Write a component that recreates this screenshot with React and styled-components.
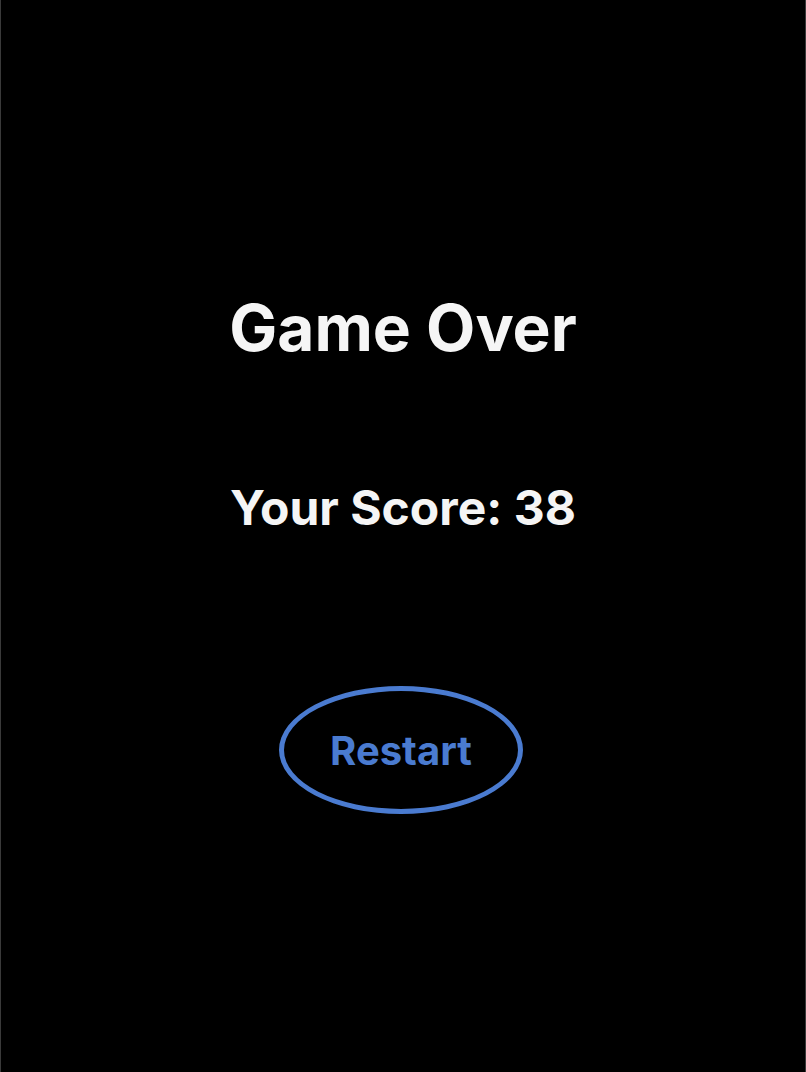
import React from 'react';
import styled, { createGlobalStyle } from 'styled-components';

const GlobalStyle = createGlobalStyle`
  html, body {
    margin: 0;
    padding: 0;
    background: #000;
  }
  body {
    font-family: Inter, "Noto Sans", sans-serif;
  }
`;

const Screen = styled.div`
  box-sizing: border-box;
  height: 1072px;
  display: flex;
  flex-direction: column;
  align-items: center;
  padding-top: 290px;
  background: #000;
  border-left: 1px solid #3a3a3a;
  border-right: 1px solid #3a3a3a;
`;

const Title = styled.h1`
  margin: 0;
  font-size: 64px;
  font-weight: 700;
  line-height: 76px;
  color: #f5f5f5;
`;

const Score = styled.h2`
  margin: 110px 0 0;
  font-size: 48px;
  font-weight: 700;
  line-height: 64px;
  color: #f5f5f5;
`;

const RestartButton = styled.button`
  margin: 146px 4px 0 0;
  width: 244px;
  height: 128px;
  box-sizing: border-box;
  border: 5px solid #4a7bd0;
  border-radius: 50%;
  background: transparent;
  color: #4a7bd0;
  font-family: Inter, "Noto Sans", sans-serif;
  font-size: 40px;
  font-weight: 700;
  cursor: pointer;
`;

export default function App() {
  return (
    <>
      <GlobalStyle />
      <Screen>
        <Title>Game Over</Title>
        <Score>Your Score: 38</Score>
        <RestartButton>Restart</RestartButton>
      </Screen>
    </>
  );
}
